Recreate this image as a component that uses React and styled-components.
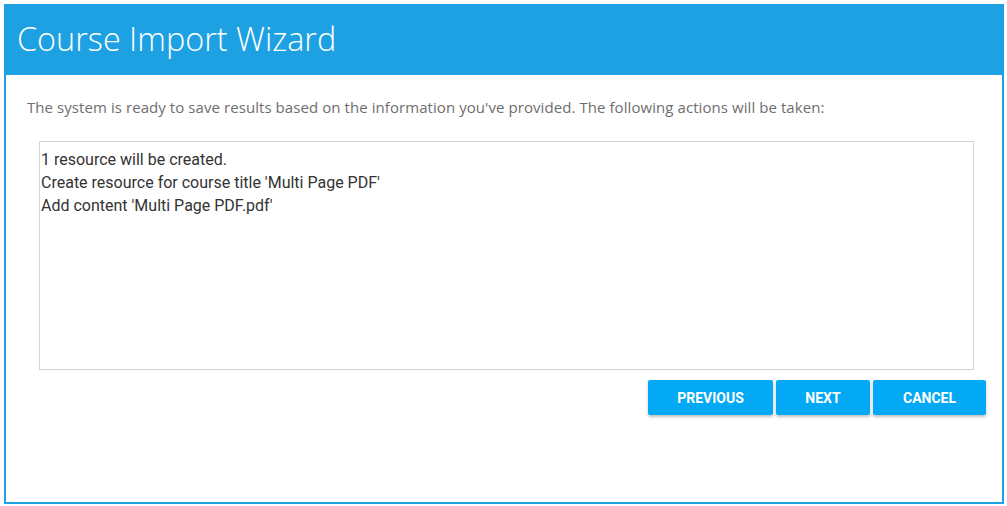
import React from "react";
import styled, { createGlobalStyle } from "styled-components";

const Global = createGlobalStyle`
  html, body { margin: 0; padding: 0; background: #fff; }
  body { padding: 4px; }
`;

const Wizard = styled.div`
  box-sizing: border-box;
  width: 1000px;
  height: 500px;
  border: 2px solid #1da1e2;
  border-top: none;
  display: flex;
  flex-direction: column;
`;

const Header = styled.div`
  background: #1da1e2;
  height: 71px;
  margin: 0 -2px;
  display: flex;
  align-items: center;
  padding-left: 13px;
  padding-bottom: 3px;
  box-sizing: border-box;
`;

const Title = styled.h1`
  margin: 0;
  color: #fff;
  font-family: "Segoe UI", "Open Sans", sans-serif;
  font-weight: 300;
  font-size: 32.4px;
  letter-spacing: 0;
`;

const Body = styled.div`
  padding: 22px 16px 0 21px;
  display: flex;
  flex-direction: column;
`;

const Intro = styled.p`
  margin: 0;
  font-family: "Open Sans", sans-serif;
  font-size: 15px;
  line-height: 20px;
  letter-spacing: 0.07px;
  color: #6e6e6e;
`;

const Summary = styled.div`
  box-sizing: border-box;
  margin: 24px 12px 0 12px;
  height: 229px;
  border: 1px solid #d4d4d4;
  padding: 6px 1px;
  font-family: Roboto, sans-serif;
  font-size: 16px;
  line-height: 23px;
  color: #333;
`;

const Actions = styled.div`
  display: flex;
  justify-content: flex-end;
  gap: 3px;
  margin-top: 10px;
`;

const Button = styled.button`
  width: ${(p) => p.w}px;
  height: 35px;
  border: none;
  border-radius: 2px;
  background: #03a9f4;
  color: #fff;
  font-family: Roboto, sans-serif;
  font-weight: 700;
  font-size: 14px;
  text-transform: uppercase;
  box-shadow: 0 2px 3px rgba(0, 0, 0, 0.25);
  padding: 0;
  cursor: pointer;
`;

export default function App() {
  return (
    <>
      <Global />
      <Wizard>
        <Header>
          <Title>Course Import Wizard</Title>
        </Header>
        <Body>
          <Intro>
            The system is ready to save results based on the information you've provided. The following actions will be taken:
          </Intro>
          <Summary>
            <div>1 resource will be created.</div>
            <div>Create resource for course title 'Multi Page PDF'</div>
            <div>Add content 'Multi Page PDF.pdf'</div>
          </Summary>
          <Actions>
            <Button w={125}>Previous</Button>
            <Button w={94}>Next</Button>
            <Button w={113}>Cancel</Button>
          </Actions>
        </Body>
      </Wizard>
    </>
  );
}
